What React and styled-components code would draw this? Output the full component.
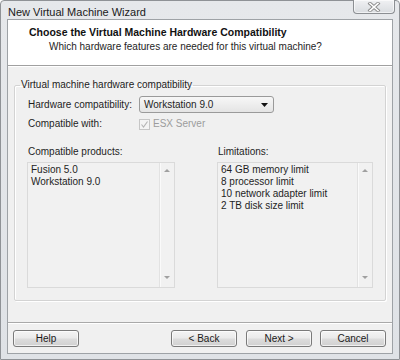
import React from "react";
import styled, { createGlobalStyle } from "styled-components";

const GlobalStyle = createGlobalStyle`
  html, body {
    margin: 0;
    padding: 0;
    background: #ffffff;
  }
  body {
    font-family: "Liberation Sans", Arial, sans-serif;
    font-size: 10px;
    color: #1e1e1e;
  }
`;

const products = ["Fusion 5.0", "Workstation 9.0"];
const limits = [
  "64 GB memory limit",
  "8 processor limit",
  "10 network adapter limit",
  "2 TB disk size limit",
];

const App = () => {
  return (
    <>
      <GlobalStyle />
      <Frame>
        <TitleBar>
          <TitleText>New Virtual Machine Wizard</TitleText>
          <CloseButton>
            <svg width="14" height="10" viewBox="0 0 14 10">
              <path d="M3 1.5 L11 8.5 M11 1.5 L3 8.5" stroke="#8a8a8a" strokeWidth="3.4" strokeLinecap="square" />
              <path d="M3 1.5 L11 8.5 M11 1.5 L3 8.5" stroke="#ffffff" strokeWidth="1.6" strokeLinecap="square" />
            </svg>
          </CloseButton>
        </TitleBar>

        <Client>
          <Header>
            <HeaderTitle>Choose the Virtual Machine Hardware Compatibility</HeaderTitle>
            <HeaderSub>Which hardware features are needed for this virtual machine?</HeaderSub>
          </Header>

          <Body>
            <Group>
              <Legend>Virtual machine hardware compatibility</Legend>
              <FormGrid>
                <Label>Hardware compatibility:</Label>
                <Select>
                  <span>Workstation 9.0</span>
                  <svg width="7" height="4" viewBox="0 0 7 4">
                    <path d="M0 0 L7 0 L3.5 4 Z" fill="#111" />
                  </svg>
                </Select>
                <Label>Compatible with:</Label>
                <CheckRow>
                  <CheckBox>
                    <svg width="9" height="9" viewBox="0 0 9 9">
                      <path d="M1.5 4.5 L3.5 7 L7.5 1.5" stroke="#b4b4b4" strokeWidth="1.1" fill="none" />
                    </svg>
                  </CheckBox>
                  <Disabled>ESX Server</Disabled>
                </CheckRow>
              </FormGrid>

              <Columns>
                <Label>Compatible products:</Label>
                <Label>Limitations:</Label>
                <ListBox>
                  <ListItems>
                    {products.map((p) => (
                      <Item key={p}>{p}</Item>
                    ))}
                  </ListItems>
                  <ScrollTrack>
                    <Arrow $up />
                    <Arrow />
                  </ScrollTrack>
                </ListBox>
                <ListBox>
                  <ListItems>
                    {limits.map((l) => (
                      <Item key={l}>{l}</Item>
                    ))}
                  </ListItems>
                  <ScrollTrack>
                    <Arrow $up />
                    <Arrow />
                  </ScrollTrack>
                </ListBox>
              </Columns>
            </Group>
          </Body>

          <Footer>
            <Button>Help</Button>
            <Spacer />
            <Button>&lt; Back</Button>
            <Button $gap="9px">Next &gt;</Button>
            <Button $gap="8px">Cancel</Button>
          </Footer>
        </Client>
      </Frame>
    </>
  );
};

export default App;

const Frame = styled.div`
  width: 400px;
  height: 360px;
  box-sizing: border-box;
  background: linear-gradient(#e6e8eb, #dfe2e6);
  border: 1px solid #8f9296;
  border-radius: 4px 4px 0 0;
  display: flex;
  flex-direction: column;
  padding: 0 6px 5px 6px;
`;

const TitleBar = styled.div`
  height: 24px;
  display: flex;
  justify-content: space-between;
  align-items: flex-start;
  margin-right: -2px;
`;

const TitleText = styled.div`
  font-size: 11px;
  line-height: 13px;
  margin-top: 5px;
  margin-left: 1px;
  color: #1a1a1a;
`;

const CloseButton = styled.div`
  width: 42px;
  height: 14px;
  box-sizing: border-box;
  margin-top: -1px;
  border: 1px solid #8c8f93;
  border-top: none;
  border-radius: 0 0 4px 4px;
  background: linear-gradient(#f0f1f3, #d9dce0);
  display: flex;
  align-items: center;
  justify-content: center;
  box-shadow: inset 0 0 0 1px rgba(255, 255, 255, 0.6);
`;

const Client = styled.div`
  flex: 1;
  display: flex;
  flex-direction: column;
  background: #f0f0f0;
  border: 1px solid #9ea2a6;
`;

const Header = styled.div`
  height: 46px;
  box-sizing: border-box;
  background: #ffffff;
  border-bottom: 1px solid #a0a0a0;
  padding: 6px 0 0 21px;
`;

const HeaderTitle = styled.div`
  font-weight: bold;
  font-size: 10.5px;
  line-height: 12px;
  color: #111;
`;

const HeaderSub = styled.div`
  margin: 3px 0 0 20px;
  line-height: 12px;
  font-size: 10px;
`;

const Body = styled.div`
  flex: 1;
  border-top: 1px solid #ffffff;
  padding: 12px 6px 0 6px;
`;

const Group = styled.fieldset`
  margin: 0;
  padding: 5px 12px 12px 12px;
  border: 1px solid #d3d3d3;
  border-radius: 2px;
  box-shadow: inset 1px 1px 0 #ffffff, 1px 1px 0 #ffffff;
  min-width: 0;
`;

const Legend = styled.legend`
  padding: 0 1px;
  margin-left: -7px;
  line-height: 12px;
  color: #222;
`;

const FormGrid = styled.div`
  display: grid;
  grid-template-columns: 112px 135px;
  row-gap: 5px;
  align-items: center;
`;

const Label = styled.div`
  line-height: 12px;
  padding-left: 1px;
`;

const Select = styled.div`
  height: 17px;
  box-sizing: border-box;
  border: 1px solid #9a9a9a;
  border-radius: 3px;
  background: linear-gradient(#f7f7f7, #e4e4e4);
  display: flex;
  align-items: center;
  justify-content: space-between;
  padding: 0 5px 0 4px;
  line-height: 12px;
`;

const CheckRow = styled.div`
  display: flex;
  align-items: center;
  gap: 3px;
`;

const CheckBox = styled.div`
  width: 11px;
  height: 11px;
  box-sizing: border-box;
  border: 1px solid #c6c6c6;
  background: #f4f4f4;
  display: flex;
  align-items: center;
  justify-content: center;
`;

const Disabled = styled.span`
  color: #9c9c9c;
  line-height: 12px;
`;

const Columns = styled.div`
  display: grid;
  grid-template-columns: 148px 156px;
  column-gap: 42px;
  row-gap: 4px;
  margin-top: 16px;
`;

const ListBox = styled.div`
  height: 126px;
  box-sizing: border-box;
  border: 1px solid #dadada;
  background: #f1f1f1;
  display: flex;
`;

const ListItems = styled.div`
  flex: 1;
  padding: 1px 0 0 3px;
`;

const Item = styled.div`
  line-height: 12px;
`;

const ScrollTrack = styled.div`
  width: 14px;
  border-left: 1px solid #e2e2e2;
  box-shadow: inset 1px 0 0 #fafafa;
  display: flex;
  flex-direction: column;
  justify-content: space-between;
  align-items: center;
  padding: 6px 0 8px;
`;

const Arrow = styled.div`
  width: 0;
  height: 0;
  border-left: 3px solid transparent;
  border-right: 3px solid transparent;
  ${({ $up }) =>
    $up ? "border-bottom: 3px solid #a0a0a0;" : "border-top: 3px solid #a0a0a0;"}
`;

const Footer = styled.div`
  border-top: 1px solid #a9a9a9;
  box-shadow: inset 0 1px 0 #ffffff;
  margin-top: 21px;
  display: flex;
  align-items: center;
  padding: 7px 6px 6px 5px;
`;

const Spacer = styled.div`
  flex: 1;
`;

const Button = styled.div`
  width: 66px;
  height: 17px;
  box-sizing: border-box;
  margin-left: ${({ $gap }) => $gap || "0"};
  border: 1px solid #7a7a7a;
  border-radius: 3px;
  background: linear-gradient(#f4f4f4 0%, #ebebeb 45%, #dcdcdc 55%, #d0d0d0 100%);
  box-shadow: inset 0 0 0 1px rgba(255, 255, 255, 0.7);
  display: flex;
  align-items: center;
  justify-content: center;
  line-height: 12px;
  color: #1a1a1a;
`;
